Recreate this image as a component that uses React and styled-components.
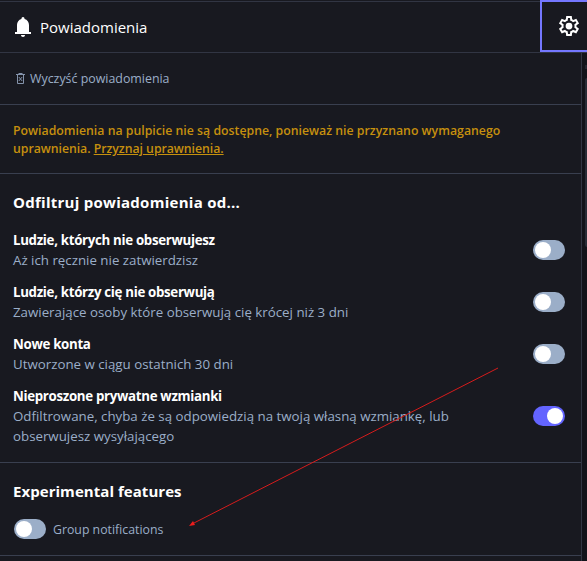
import styled, { createGlobalStyle } from "styled-components";

const GlobalStyle = createGlobalStyle`
  * {
    box-sizing: border-box;
  }

  body {
    margin: 0;
    background-color: #181920;
    color: white;
    font-family: "Open Sans", "Noto Sans", sans-serif;
    overflow: hidden;
  }

  h3, p {
    margin: 0;
  }
`;

const Page = styled.main`
  position: relative;
  width: 587px;
  height: 561px;
  display: flex;
  flex-direction: column;
  background-color: #181920;
  overflow: hidden;
`;

const Header = styled.header`
  display: flex;
  flex: 0 0 53px;
  border-bottom: 1px solid #313543;

  .title {
    display: flex;
    flex: 1;
    align-items: center;
    margin-top: 1px;
    padding-left: 15px;
    gap: 9px;
    border-top: 1px solid #313543;
  }
`;

const SettingsButton = styled.button`
  width: 47px;
  height: 52px;
  padding: 0 0 1px 15px;
  border: 2px solid #7477ff;
  border-right: 0;
  background: none;
  color: white;
  line-height: 0;
  text-align: left;
`;

const Body = styled.div`
  display: flex;
  flex: 1;
  min-height: 0;
`;

const Column = styled.div`
  flex: 0 0 582px;
  border-right: 1px solid #313543;
`;

const Scrollbar = styled.div`
  flex: 1;
  padding: 12px 0 0 3px;
  background-color: #12131a;

  .arrow {
    height: 4px;
    background-color: #242631;
  }

  .thumb {
    height: 169px;
    margin-top: 9px;
    border-radius: 2px 0 0 2px;
    background-color: #282c37;
  }
`;

const Section = styled.section`
  height: ${(props) => props.$height}px;
  padding: ${(props) => props.$top}px 16px 0 13px;
  border-bottom: 1px solid #393f4f;
`;

const Text = styled.span`
  display: block;
  color: ${(props) => props.$color || "white"};
  font-size: ${(props) => props.$size || 13.3}px;
  font-weight: ${(props) => props.$weight || 400};
  line-height: ${(props) => props.$line || 20}px;
  letter-spacing: ${(props) => props.$spacing || 0}px;
  white-space: nowrap;

  a {
    text-decoration: underline;
  }
`;

const ClearButton = styled.div`
  display: flex;
  align-items: center;
  gap: 4px;
  padding-left: 2px;

  svg {
    margin-bottom: 2px;
  }
`;

const SettingList = styled.div`
  display: flex;
  flex-direction: column;
  gap: 12px;
  margin-top: 16px;
`;

const SettingRow = styled.div`
  display: flex;
  justify-content: space-between;
  align-items: center;
`;

const GroupRow = styled.div`
  display: flex;
  align-items: center;
  gap: 7px;
  margin-top: 15px;
  padding-left: 1px;

  span {
    padding-top: 2px;
  }
`;

const Toggle = styled.div`
  display: flex;
  flex: 0 0 32px;
  justify-content: ${(props) => (props.$on ? "flex-end" : "flex-start")};
  height: 20px;
  padding: 2px;
  border-radius: 10px;
  background-color: ${(props) => (props.$on ? "#6364ff" : "#9baec8")};

  &::before {
    content: "";
    width: 16px;
    height: 16px;
    border-radius: 50%;
    background-color: white;
  }
`;

const Arrow = styled.svg`
  position: absolute;
  top: 0;
  left: 0;
  pointer-events: none;
`;

const muted = "#9baec8";

const filters = [
  {
    title: "Ludzie, których nie obserwujesz",
    lines: ["Aż ich ręcznie nie zatwierdzisz"],
  },
  {
    title: "Ludzie, którzy cię nie obserwują",
    lines: ["Zawierające osoby które obserwują cię krócej niż 3 dni"],
  },
  {
    title: "Nowe konta",
    lines: ["Utworzone w ciągu ostatnich 30 dni"],
  },
  {
    title: "Nieproszone prywatne wzmianki",
    lines: [
      "Odfiltrowane, chyba że są odpowiedzią na twoją własną wzmiankę, lub",
      "obserwujesz wysyłającego",
    ],
    on: true,
  },
];

const BellIcon = () => (
  <svg width="16" height="20" viewBox="0 0 16 20" fill="currentColor">
    <path d="M0 15h2V8c0-3 1.700-5.300 4.400-6C6.500.8 7 0 8 0s1.500.8 1.600 2C12.300 2.700 14 5 14 8v7h2v2H0z" />
    <path d="M6 18h4c0 1.200-.8 2-2 2s-2-.8-2-2z" />
  </svg>
);

const GearIcon = () => (
  <svg width="24" height="24" viewBox="0 -960 960 960" fill="currentColor">
    <path d="m370-80-16-128q-13-5-24.500-12T307-235l-119 50L78-375l103-78q-1-7-1-13.500v-27q0-6.500 1-13.500L78-585l110-190 119 50q11-8 23-15t24-12l16-128h220l16 128q13 5 24.500 12t22.500 15l119-50 110 190-103 78q1 7 1 13.500v27q0 6.500-2 13.500l103 78-110 190-118-50q-11 8-23 15t-24 12L590-80H370Zm70-80h79l14-106q31-8 57.500-23.500T639-327l99 41 39-68-86-65q5-14 7-29.500t2-31.500q0-16-2-31.500t-7-29.500l86-65-39-68-99 42q-22-23-48.500-38.500T533-694l-13-106h-79l-14 106q-31 8-57.500 23.500T321-633l-99-41-39 68 86 64q-5 15-7 30t-2 32q0 16 2 31t7 30l-86 65 39 68 99-42q22 23 48.500 38.500T427-266l13 106Z" />
    <circle cx="480" cy="-480" r="135" />
  </svg>
);

const TrashIcon = () => (
  <svg width="11" height="13" viewBox="0 0 11 13" fill="none" stroke="#8493ab">
    <path d="M1 2.500h9M3.500 1.500h4M2.500 2.500v9h6v-9M3.800 5l3.400 4M7.200 5l-3.400 4" />
  </svg>
);

const App = () => {
  return (
    <>
      <GlobalStyle />
      <Page>
        <Header>
          <div className="title">
            <BellIcon />
            <Text $size={15} $line={24}>
              Powiadomienia
            </Text>
          </div>
          <SettingsButton>
            <GearIcon />
          </SettingsButton>
        </Header>
        <Body>
          <Column>
            <Section $height={52} $top={16}>
              <ClearButton>
                <TrashIcon />
                <Text $size={12.4} $color={muted}>
                  Wyczyść powiadomienia
                </Text>
              </ClearButton>
            </Section>
            <Section $height={69} $top={17}>
              <Text $size={12.3} $line={18} $weight={600} $color="#c6900e">
                Powiadomienia na pulpicie nie są dostępne, ponieważ nie przyznano wymaganego
              </Text>
              <Text $size={12.3} $line={18} $weight={600} $color="#c6900e" $spacing={-0.04}>
                uprawnienia. <a>Przyznaj uprawnienia.</a>
              </Text>
            </Section>
            <Section $height={289} $top={16}>
              <Text as="h3" $size={15} $line={24} $weight={700} $spacing={0.27}>
                Odfiltruj powiadomienia od...
              </Text>
              <SettingList>
                {filters.map((item) => (
                  <SettingRow key={item.title}>
                    <div>
                      <Text $weight={700} $spacing={-0.32}>
                        {item.title}
                      </Text>
                      {item.lines.map((line) => (
                        <Text key={line} $color={muted}>
                          {line}
                        </Text>
                      ))}
                    </div>
                    <Toggle $on={item.on} />
                  </SettingRow>
                ))}
              </SettingList>
            </Section>
            <Section $height={93} $top={16}>
              <Text as="h3" $size={15} $line={24} $weight={700} $spacing={0.05}>
                Experimental features
              </Text>
              <GroupRow>
                <Toggle />
                <Text $size={12.3} $color={muted}>
                  Group notifications
                </Text>
              </GroupRow>
            </Section>
          </Column>
          <Scrollbar>
            <div className="arrow" />
            <div className="thumb" />
          </Scrollbar>
        </Body>
        <Arrow width="587" height="561">
          <path d="M498 368L192 524" stroke="#d61c1c" />
          <path d="M189 526l4-5 2 4z" fill="#ee1c1c" />
        </Arrow>
      </Page>
    </>
  );
};

export default App;
